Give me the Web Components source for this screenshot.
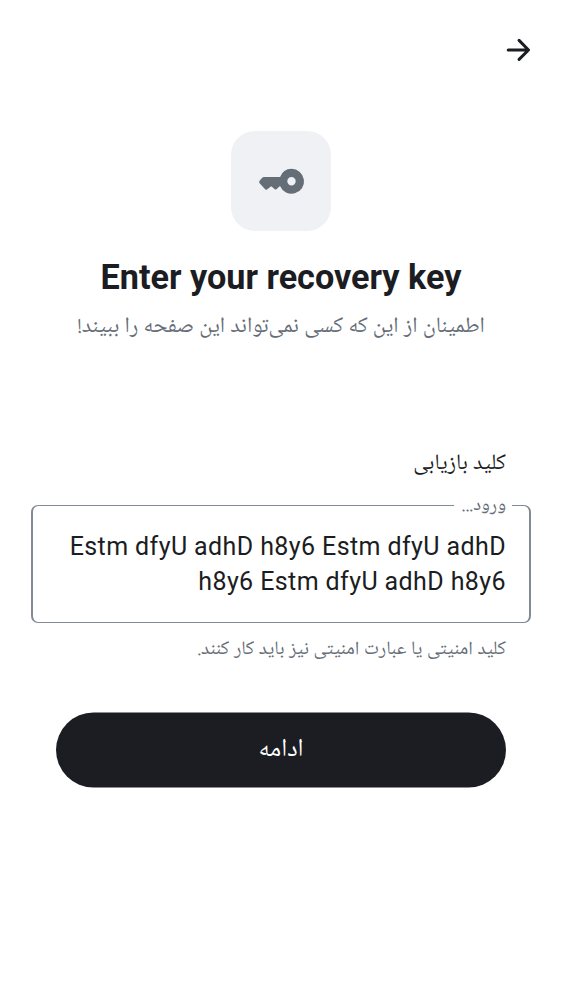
<!DOCTYPE html>
<html lang="fa">
<head>
<meta charset="utf-8">
<title>Recovery key</title>
<style>
body{margin:0;background:#fff;color:#1b1d22;font-family:"Noto Naskh Arabic UI","Noto Naskh Arabic","Noto Sans Arabic",Roboto,"DejaVu Sans",sans-serif}
</style>
</head>
<body>
<recovery-screen></recovery-screen>
<script>
const define = (name, html) => {
  const t = document.createElement('template');
  t.innerHTML = html;
  customElements.define(name, class extends HTMLElement {
    constructor() {
      super();
      this.attachShadow({mode: 'open'}).append(t.content.cloneNode(true));
    }
  });
};

define('top-bar', `
<style>:host{display:flex;height:100px;align-items:center;padding:0 31px;box-sizing:border-box}svg{display:block}</style>
<svg width="26" height="26" viewBox="0 0 26 26" fill="none" stroke="#1b1d22" stroke-width="3" stroke-linecap="round" stroke-linejoin="round"><path d="M3.2 13H23.3M14.1 3.4L23.5 13L14.1 22.4"/></svg>`);

define('key-badge', `
<style>:host{display:block;width:100px;height:100px;border-radius:24px;background:#f0f1f5}svg{display:block}</style>
<svg width="100" height="100" viewBox="0 0 100 100" fill="#656d77"><path fill-rule="evenodd" d="M60.5 37.8a12.5 12.5 0 1 1-11.5 17.3L45.4 58.2Q44.6 58.9 43.8 58.2L40.2 55.2L36 58.4Q35 59 34.1 58.3L28.6 52.2Q27.6 51 28.6 49.8L31 47Q31.8 46 33 46H49.1A12.5 12.5 0 0 1 60.5 37.8ZM60.5 46.1a4.2 4.2 0 1 0 0 8.4a4.2 4.2 0 0 0 0-8.4Z"/></svg>`);

define('page-heading', `
<style>:host{display:flex;flex-direction:column;align-items:center}
h1{margin:26px 0 0;font:700 34.2px/40px Roboto,sans-serif;direction:ltr;white-space:nowrap}
p{margin:12px 0 0;font-size:22.1px;line-height:34px;word-spacing:.35px;color:#656d77;white-space:nowrap}</style>
<key-badge></key-badge><h1><slot name="title"></slot></h1><p><slot></slot></p>`);

define('outlined-field', `
<style>:host{display:block}
.label{padding:0 25px;font-size:22.1px;line-height:34px;word-spacing:.35px}
fieldset{margin:12px 0 0;padding:12px 23px 0;height:131px;box-sizing:border-box;border:1.6px solid #818a95;border-width:1px 2px;border-radius:7px;min-width:0}
legend{box-sizing:border-box;margin-right:-6px;padding:1px 6px 0 8px;font-size:18.9px;line-height:26px;height:26px;color:#656d77}
.value{font:25px/34.5px Roboto,sans-serif;letter-spacing:.4px;white-space:nowrap;direction:ltr;text-align:right}
.hint{padding:0 25px;margin-top:13px;font-size:19.15px;line-height:28px;word-spacing:.4px;color:#656d77;white-space:nowrap}</style>
<div class="label"><slot name="label"></slot></div>
<fieldset><legend><slot name="placeholder"></slot></legend><div class="value"><slot></slot></div></fieldset>
<div class="hint"><slot name="hint"></slot></div>`);

define('pill-button', `
<style>:host{display:block}
button{display:block;width:100%;height:75px;border:0;border-radius:38px;background:#1b1d22;color:#fff;font-family:inherit;font-size:25px;line-height:34px;padding:0 0 3px}</style>
<button><slot></slot></button>`);

define('recovery-screen', `
<style>:host{display:block;height:1000px;direction:rtl;overflow:hidden}
page-heading{margin-top:31px}outlined-field{margin:103px 31px 0}pill-button{margin:48px 56px 0;transform:translateY(.5px)}</style>
<top-bar></top-bar>
<page-heading><span slot="title">Enter your recovery key</span><span>اطمینان از این که کسی نمی‌تواند این صفحه را ببیند!</span></page-heading>
<outlined-field><span slot="label">کلید بازیابی</span><span slot="placeholder">ورود...</span><span>Estm dfyU adhD h8y6 Estm dfyU adhD<br>h8y6 Estm dfyU adhD h8y6</span><span slot="hint">کلید امنیتی یا عبارت امنیتی نیز باید کار کنند.</span></outlined-field>
<pill-button>ادامه</pill-button>`);
</script>
</body>
</html>
